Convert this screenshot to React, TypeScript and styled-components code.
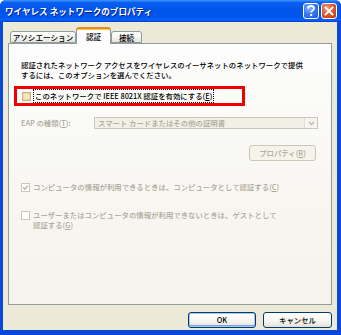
import React from "react";
import styled, { createGlobalStyle, css } from "styled-components";

const Global = createGlobalStyle`
  html, body { margin: 0; padding: 0; background: #ffffff; }
  body { font-family: "Noto Sans CJK JP", "Noto Sans", sans-serif; font-weight: 500; }
  * { box-sizing: border-box; }
`;

const Window = styled.div`
  width: 341px;
  height: 335px;
  display: flex;
  flex-direction: column;
  border-radius: 6px 6px 0 0;
  overflow: hidden;
  background: #0a48d8;
`;

const TitleBar = styled.div`
  height: 22px;
  flex: none;
  display: flex;
  align-items: center;
  padding: 0 4px 0 5px;
  background: linear-gradient(180deg, #3d95ff 0%, #0a5ff0 12%, #0053e8 45%, #0058ee 80%, #0a62f6 90%, #0042d0 100%);
`;

const TitleText = styled.div`
  flex: 1;
  color: #ffffff;
  font-weight: 700;
  font-size: 8.6px;
  line-height: 12px;
  letter-spacing: 0;
  text-shadow: 1px 1px 0 #0a1e8c;
  white-space: nowrap;
`;

const CaptionButton = styled.div<{ $close?: boolean }>`
  width: 16px;
  height: 16px;
  margin-left: 2px;
  border: 1px solid #ffffff;
  border-radius: 3px;
  display: flex;
  align-items: center;
  justify-content: center;
  color: #ffffff;
  ${(p) =>
    p.$close
      ? css`background: radial-gradient(circle at 35% 30%, #f4a080 0%, #e2582f 45%, #c4360f 100%);`
      : css`background: radial-gradient(circle at 35% 30%, #8fb6ff 0%, #3a78ee 45%, #1f56d6 100%);`}
`;

const Body = styled.div`
  flex: 1;
  display: flex;
  flex-direction: column;
  margin: 0 4px 5px 3px;
  padding: 5px 5px 0 5px;
  background: #ece9d8;
`;

const TabRow = styled.div`
  display: flex;
  align-items: flex-end;
  height: 16px;
  padding-left: 2px;
  position: relative;
  z-index: 1;
`;

const Tab = styled.div<{ $active?: boolean; $w: number }>`
  width: ${(p) => p.$w}px;
  height: ${(p) => (p.$active ? 17 : 12)}px;
  margin-bottom: ${(p) => (p.$active ? -1 : 0)}px;
  border: 1px solid #919b9c;
  border-bottom: ${(p) => (p.$active ? "none" : "1px solid #919b9c")};
  border-radius: 3px 3px 0 0;
  font-size: 7.6px;
  line-height: 10px;
  color: #000000;
  display: flex;
  justify-content: center;
  padding-top: ${(p) => (p.$active ? 3 : 1)}px;
  white-space: nowrap;
  ${(p) =>
    p.$active
      ? css`
          background: #fcfcfe;
          border-top: 2px solid #e68b2c;
          box-shadow: inset 0 1px 0 #ffc73c;
        `
      : css`
          background: linear-gradient(180deg, #ffffff 0%, #f3f3ef 60%, #e4e3dc 100%);
        `}
`;

const Panel = styled.div`
  height: 262px;
  flex: none;
  border: 1px solid #919b9c;
  background: linear-gradient(180deg, #fdfdfd 0%, #f7f6f1 60%, #f4f3ee 100%);
  padding: 16px 0 0 12px;
  display: flex;
  flex-direction: column;
  align-items: flex-start;
`;

const Text = styled.div<{ $disabled?: boolean }>`
  font-size: 7.4px;
  line-height: 9.5px;
  color: ${(p) => (p.$disabled ? "#aca899" : "#000000")};
  white-space: nowrap;
`;

const HighlightBox = styled.div`
  margin-top: 7px;
  margin-left: -7px;
  width: 231px;
  height: 20px;
  border: 3px solid #f00000;
  display: flex;
  align-items: center;
  padding-left: 5px;
`;

const Check = styled.div<{ $disabled?: boolean; $hover?: boolean }>`
  width: 9px;
  height: 9px;
  flex: none;
  display: flex;
  align-items: center;
  justify-content: center;
  border: 1px solid ${(p) => (p.$disabled ? "#cac8bb" : "#1c5180")};
  background: ${(p) => (p.$disabled ? "#ffffff" : "linear-gradient(135deg, #dcdad5 0%, #f2f1ea 100%)")};
  ${(p) =>
    p.$hover &&
    css`
      border-color: #b8b29d;
      box-shadow: inset 0 0 0 1px #f8d88a;
      background: #f3e6bd;
    `}
`;

const FocusLabel = styled.div`
  margin-left: 2px;
  padding: 1px;
  border: 1px dotted #000000;
  font-size: 7.4px;
  line-height: 10px;
  color: #000000;
  white-space: nowrap;
`;

const EapRow = styled.div`
  margin-top: 11px;
  display: flex;
  align-items: center;
  height: 12px;
`;

const EapLabel = styled(Text)`
  width: 73px;
`;

const Select = styled.div`
  width: 224px;
  height: 12px;
  border: 1px solid #cac8bb;
  background: #f1efe6;
  display: flex;
  align-items: center;
  padding-left: 3px;
`;

const SelectText = styled(Text)`
  flex: 1;
  line-height: 10px;
`;

const SelectArrow = styled.div`
  width: 13px;
  height: 10px;
  background: #f5f4ee;
  border-left: 1px solid #e2e0d6;
  display: flex;
  align-items: center;
  justify-content: center;
`;

const PropRow = styled.div`
  align-self: stretch;
  display: flex;
  justify-content: flex-end;
  padding-right: 15px;
  margin-top: 16px;
`;

const PushButton = styled.div<{ $w: number; $disabled?: boolean; $default?: boolean }>`
  width: ${(p) => p.$w}px;
  height: 16px;
  border: 1px solid ${(p) => (p.$disabled ? "#cac8bb" : "#003c74")};
  border-radius: 3px;
  display: flex;
  align-items: center;
  justify-content: center;
  font-size: 7.4px;
  line-height: 10px;
  color: ${(p) => (p.$disabled ? "#aca899" : "#000000")};
  background: ${(p) =>
    p.$disabled ? "#f5f4ea" : "linear-gradient(180deg, #ffffff 0%, #f6f5f1 60%, #e3e0d3 100%)"};
  ${(p) =>
    p.$default &&
    css`
      box-shadow: inset 0 0 0 1px #a8c8f4, inset 0 -1px 0 1px #7aa3e6;
    `}
  white-space: nowrap;
`;

const CheckRow = styled.div<{ $mt: number }>`
  margin-top: ${(p) => p.$mt}px;
  display: flex;
  align-items: flex-start;
`;

const CheckText = styled(Text)`
  margin-left: 3px;
  line-height: 10px;
`;

const CheckOffset = styled.div`
  padding-top: 1px;
`;

const ButtonRow = styled.div`
  margin-top: 7px;
  display: flex;
  justify-content: flex-end;
  gap: 7px;
`;

const HelpGlyph = () => (
  <svg width="10" height="12" viewBox="0 0 10 12">
    <path d="M2 3.6 C2 1.6 3.4 1 5 1 C6.8 1 8 2 8 3.5 C8 5.3 5.2 5.5 5.2 7.6" fill="none" stroke="#fff" strokeWidth="1.8" />
    <rect x="4.2" y="9" width="2" height="2" fill="#fff" />
  </svg>
);

const CloseGlyph = () => (
  <svg width="10" height="10" viewBox="0 0 10 10">
    <path d="M1.5 1.5 L8.5 8.5 M8.5 1.5 L1.5 8.5" stroke="#fff" strokeWidth="1.9" strokeLinecap="square" />
  </svg>
);

const Chevron = () => (
  <svg width="7" height="5" viewBox="0 0 7 5">
    <path d="M1 1 L3.5 3.5 L6 1" fill="none" stroke="#b9b7ab" strokeWidth="1.3" />
  </svg>
);

const CheckMark = () => (
  <svg width="7" height="7" viewBox="0 0 7 7">
    <path d="M1 3.4 L2.8 5.2 L6 1.6" fill="none" stroke="#b5b2a4" strokeWidth="1.3" />
  </svg>
);

export default function App() {
  return (
    <>
      <Global />
      <Window>
        <TitleBar>
          <TitleText>ワイヤレス ネットワークのプロパティ</TitleText>
          <CaptionButton>
            <HelpGlyph />
          </CaptionButton>
          <CaptionButton $close>
            <CloseGlyph />
          </CaptionButton>
        </TitleBar>
        <Body>
          <TabRow>
            <Tab $w={66}>アソシエーション</Tab>
            <Tab $w={35} $active>
              認証
            </Tab>
            <Tab $w={31}>接続</Tab>
          </TabRow>
          <Panel>
            <Text>
              認証されたネットワーク アクセスをワイヤレスのイーサネットのネットワークで提供
              <br />
              するには、このオプションを選んでください。
            </Text>
            <HighlightBox>
              <Check $hover />
              <FocusLabel>
                このネットワークで IEEE 8021X 認証を有効にする(<u>E</u>)
              </FocusLabel>
            </HighlightBox>
            <EapRow>
              <EapLabel $disabled>
                EAP の種類(<u>T</u>):
              </EapLabel>
              <Select>
                <SelectText $disabled>スマート カードまたはその他の証明書</SelectText>
                <SelectArrow>
                  <Chevron />
                </SelectArrow>
              </Select>
            </EapRow>
            <PropRow>
              <PushButton $w={67} $disabled>
                プロパティ(<u>R</u>)
              </PushButton>
            </PropRow>
            <CheckRow $mt={21}>
              <CheckOffset>
                <Check $disabled>
                  <CheckMark />
                </Check>
              </CheckOffset>
              <CheckText $disabled>
                コンピュータの情報が利用できるときは、コンピュータとして認証する(<u>C</u>)
              </CheckText>
            </CheckRow>
            <CheckRow $mt={18}>
              <CheckOffset>
                <Check $disabled />
              </CheckOffset>
              <CheckText $disabled>
                ユーザーまたはコンピュータの情報が利用できないときは、ゲストとして
                <br />
                認証する(<u>G</u>)
              </CheckText>
            </CheckRow>
          </Panel>
          <ButtonRow>
            <PushButton $w={68} $default>
              OK
            </PushButton>
            <PushButton $w={69}>キャンセル</PushButton>
          </ButtonRow>
        </Body>
      </Window>
    </>
  );
}
